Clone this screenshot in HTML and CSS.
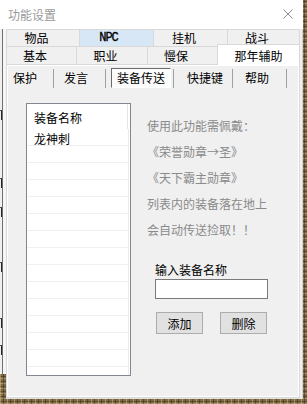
FILE: index.html
```html
<!DOCTYPE html>
<html lang="zh">
<head>
  <meta charset="UTF-8" />
  <title>功能设置</title>
  <meta name="viewport" content="width=device-width, initial-scale=1.0" />
  <link rel="stylesheet" href="styles.css">
</head>
<body>

<div class="window">
  <div class="titlebar">
    <span class="title">功能设置</span>
    <svg class="close" width="10" height="10" viewBox="0 0 10 10">
      <path d="M0.5 0.5 L9.5 9.5 M9.5 0.5 L0.5 9.5" stroke="#8c8c8c" stroke-width="1" fill="none"/>
    </svg>
  </div>

  <div class="client">
    <!-- bit of the window behind, peeking out on the left -->
    <div class="behind">
      <div class="ghost">
        <div class="ghost-marks">
          <i class="g1"></i>
          <i class="g2"></i>
          <i class="g3"></i>
          <i class="g4"></i>
          <i class="g5"></i>
          <i class="g6"></i>
        </div>
        <div class="ghost-line"></div>
      </div>
    </div>

    <div class="tabctl">
      <div class="tabrow row1">
        <div class="tab">物品</div>
        <div class="tab hot npc">NPC</div>
        <div class="tab">挂机</div>
        <div class="tab">战斗</div>
      </div>
      <div class="tabrow row2">
        <div class="tab">基本</div>
        <div class="tab">职业</div>
        <div class="tab">慢保</div>
        <div class="tab active">那年辅助</div>
      </div>

      <div class="page">
        <div class="dlg">
          <div class="itabs">
            <div class="itab t1">保护</div>
            <div class="sep"></div>
            <div class="itab t2">发言</div>
            <div class="sep"></div>
            <div class="itab t3 selected">装备传送</div>
            <div class="sep"></div>
            <div class="itab t4">快捷键</div>
            <div class="sep"></div>
            <div class="itab t5">帮助</div>
            <div class="sep"></div>
          </div>

          <div class="dlg-body">
            <div class="listbox">
              <div class="lv-head">装备名称</div>
              <div class="lv-row">龙神刺</div>
              <div class="lv-row"></div>
              <div class="lv-row"></div>
              <div class="lv-row"></div>
              <div class="lv-row"></div>
              <div class="lv-row"></div>
              <div class="lv-row"></div>
              <div class="lv-row"></div>
              <div class="lv-row"></div>
              <div class="lv-row"></div>
              <div class="lv-row"></div>
              <div class="lv-row"></div>
              <div class="lv-row"></div>
              <div class="lv-row"></div>
              <div class="lv-row"></div>
            </div>

            <div class="side">
              <p class="note">使用此功能需佩戴：</p>
              <p class="note">《荣誉勋章→圣》</p>
              <p class="note">《天下霸主勋章》</p>
              <p class="note">列表内的装备落在地上</p>
              <p class="note">会自动传送捡取！！</p>

              <div class="field-label">输入装备名称</div>
              <div class="input"></div>

              <div class="btns">
                <button>添加</button>
                <button>删除</button>
              </div>
            </div>
          </div>
        </div>
      </div>
    </div>

    <div class="edge"></div>
  </div>
</div>

</body>
</html>
```

FILE: styles.css
```css
* {
  box-sizing: border-box;
}

body {
  margin: 0;
  width: 307px;
  height: 404px;
  overflow: hidden;
  background-color: #7f6b45;
  background-image:
    repeating-linear-gradient(90deg, rgba(255,228,160,0.35) 0 1px, transparent 1px 3px, rgba(40,28,8,0.4) 3px 4px, transparent 4px 7px),
    repeating-linear-gradient(0deg, rgba(255,238,190,0.3) 0 1px, transparent 1px 2px, rgba(30,20,5,0.35) 2px 3px, transparent 3px 5px);
  font-family: "Noto Sans CJK SC", sans-serif;
  font-size: 12px;
  color: #000;
}

.window {
  width: 303px;
  height: 399px;
  display: flex;
  flex-direction: column;
}

.titlebar {
  height: 29px;
  background: #fff;
  display: flex;
  align-items: center;
  justify-content: space-between;
  padding: 0 10px 0 8px;
}

.title {
  color: #9a9a9a;
  font-size: 12px;
}

.close {
  display: block;
  margin-top: -1px;
}

.client {
  flex: 1;
  display: flex;
}

/* window behind */
.behind {
  width: 6px;
}

.ghost {
  height: 345px;
  display: flex;
  background: #f6f6f6;
}

.ghost-marks {
  width: 2px;
  display: flex;
  flex-direction: column;
  background: #f0f0f0;
}

.ghost-marks i {
  display: block;
  width: 2px;
  height: 10px;
  border-right: 1px solid #222;
  border-top: 1px solid #555;
}

.g1 { margin-top: 81px; }
.g2 { margin-top: 58px; }
.g3 { margin-top: 19px; }
.g4 { margin-top: 45px; }
.g5 { margin-top: 46px; }
.g6 { margin-top: 17px; }

.ghost-line {
  width: 1px;
  background: #6f6f6f;
}

/* tab control */
.tabctl {
  width: 294px;
  display: flex;
  flex-direction: column;
  border-bottom: 1px solid #e2e2e2;
}

.tabrow {
  display: grid;
  background: #f0f0f0;
}

.row1 {
  grid-template-columns: 73px 74px 74px 73px;
}

.row2 {
  grid-template-columns: 70px 71px 70px 83px;
}

.tab {
  display: flex;
  align-items: center;
  justify-content: center;
  padding-right: 13px;
  background: #f0f0f0;
  border-top: 1px solid #d9d9d9;
  border-left: 1px solid #d9d9d9;
  line-height: 14px;
}

.tab:last-child {
  border-right: 1px solid #d9d9d9;
}

.row1 .tab {
  height: 17px;
}

.row2 .tab {
  height: 18px;
}

.tab.hot {
  background: #d8e7f6;
}

.npc {
  font-family: "Liberation Mono", monospace;
  letter-spacing: -1px;
  font-size: 12px;
  padding-right: 16px;
  -webkit-text-stroke: 0.3px #000;
}

.row2 .tab.active {
  background: #fff;
  padding-right: 0;
  padding-top: 1px;
  height: 21px;
  margin-top: -2px;
  margin-bottom: -1px;
  position: relative;
  z-index: 1;
}

.page {
  flex: 1;
  display: flex;
  background: #fff;
  border: 1px solid #d9d9d9;
  padding: 1px;
}

.dlg {
  flex: 1;
  background: #f0f0f0;
}

/* inner button tabs */
.itabs {
  display: flex;
  height: 20px;
  margin-top: 2px;
}

.itab {
  display: flex;
  align-items: center;
  line-height: 14px;
}

.t1 { width: 45px; padding-left: 5px; }
.t2 { width: 51px; padding-left: 10px; }
.t3 { width: 60px; padding-left: 5px; margin: 0 2px 0 5px; }
.t4 { width: 58px; padding-left: 13px; }
.t5 { width: 53px; padding-left: 12px; }

.itab.selected {
  background: #fcfcfc;
  border-top: 1px solid #6a6a6a;
  border-left: 1px solid #6a6a6a;
  border-right: 1px solid #fff;
  border-bottom: 1px solid #fff;
}

.sep {
  width: 1px;
  margin-top: 1px;
  background: #a0a0a0;
}

.dlg-body {
  display: flex;
  align-items: flex-start;
}

/* list */
.listbox {
  width: 105px;
  height: 273px;
  margin: 15px 0 0 18px;
  border: 1px solid #828790;
  background: #fff;
  overflow: hidden;
}

.lv-head {
  width: 101px;
  height: 25px;
  padding: 4px 0 0 7px;
  line-height: 20px;
  border-right: 1px solid #e5e5e5;
}

.lv-row {
  width: 102px;
  height: 17px;
  padding: 2px 0 0 7px;
  line-height: 16px;
  border-bottom: 1px solid #f0f0f0;
  border-right: 1px solid #ebebeb;
}

/* right side */
.side {
  margin: 15px 0 0 16px;
  padding-top: 10px;
}

.note {
  margin: 0;
  line-height: 26px;
  color: #8a8a8a;
  white-space: nowrap;
}

.field-label {
  margin: 19px 0 0 8px;
  line-height: 16px;
}

.input {
  width: 113px;
  height: 20px;
  margin: 1px 0 0 8px;
  border: 1px solid #7a7a7a;
  background: #fff;
}

.btns {
  display: flex;
  gap: 17px;
  margin: 13px 0 0 9px;
}

.btns button {
  width: 47px;
  height: 22px;
  padding: 0;
  border: 1px solid #adadad;
  background: #e1e1e1;
  font-family: inherit;
  font-size: 12px;
  color: #000;
}

.edge {
  width: 3px;
  background: #f0f0f0;
  border-right: 1px solid #cfcfcf;
}
```
